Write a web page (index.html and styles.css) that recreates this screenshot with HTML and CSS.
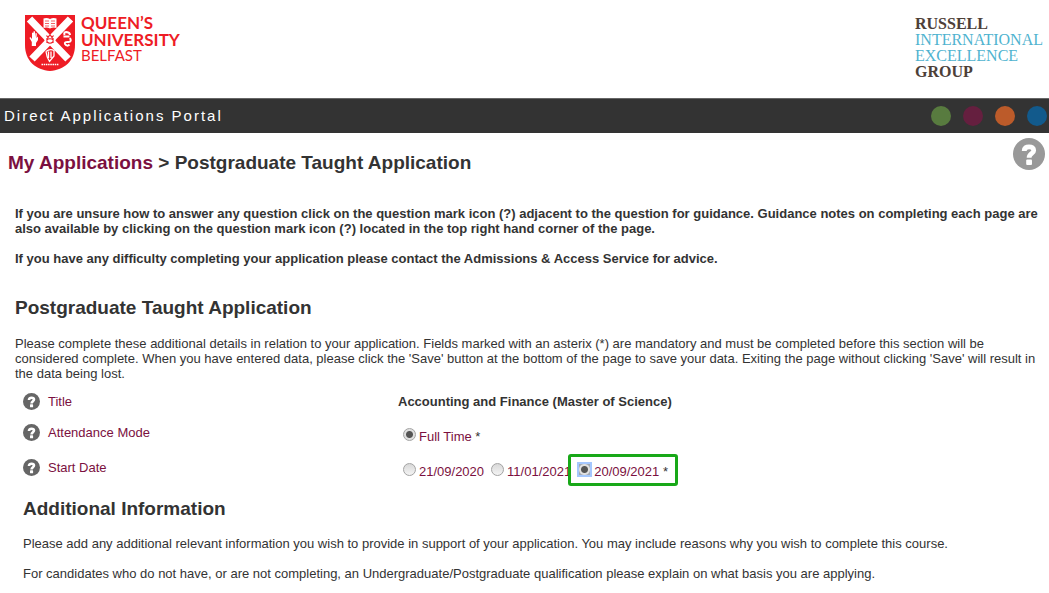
FILE: index.html
```html
<!DOCTYPE html>
<html lang="en">
<head>
<meta charset="utf-8">
<title>Direct Applications Portal</title>
<link rel="stylesheet" href="styles.css">
</head>
<body>
<svg width="0" height="0" class="defs" aria-hidden="true">
  <symbol id="help" viewBox="0 0 32 32">
    <circle cx="16" cy="16" r="16" fill="currentColor"/>
    <path d="M11.200 13C11.200 9.900 13.200 8.800 16 8.800C18.900 8.800 20.700 10.200 20.700 12.400C20.700 15.500 16.100 15.400 16.100 19.800" fill="none" stroke="#fff" stroke-width="4.800"/>
    <rect x="13.200" y="21.400" width="5.800" height="5.600" rx="1" fill="#fff"/>
  </symbol>
</svg>
<header class="masthead">
  <div class="university">
    <svg class="crest" viewBox="0 0 50 57" aria-hidden="true">
      <path fill="#ee1c25" d="M0 1H50V31C50 47 39 56 25 57C11 56 0 47 0 31Z"/>
      <path d="M4.500 5L43 45M45.500 5L7 45" stroke="#fff" stroke-width="7.500"/>
      <circle cx="25" cy="25.500" r="5.500" fill="#fff"/>
      <path fill="#fff" d="M18.500 4.500Q22 3.500 25 5Q28 3.500 31.500 4.500V14Q28 13 25 14.500Q22 13 18.500 14Z"/>
      <path d="M20 7h4M20 9.500h4M20 12h4M26 7h4M26 9.500h4M26 12h4" stroke="#ee1c25" stroke-width=".7"/>
      <path fill="#fff" d="M6.800 32V28L4.500 24L5.200 23L7 25V19Q8 18 8.500 19V23V17.500Q9.500 16.500 10 18V23L10.600 19Q11.600 18.500 11.800 20L11.500 24L13 22.500V26L11 29V32Z"/>
      <path fill="none" stroke="#fff" stroke-width="2" d="M39.500 21Q38.500 18 41.500 18Q45 18.500 45 21M38.500 22.500H44.500M45 24Q47 28 43.500 28Q39 27.500 40 30Q42 33 44.500 30.500"/>
      <path fill="none" stroke="#ee1c25" stroke-width="1.200" d="M21.500 21.500L23 23.500L25 20.500L27 23.500L28.500 21.500M21.500 26Q25 23.500 28.500 26M22 28Q25 30.500 28 28M22 24V29M28 24V29"/>
      <path fill="none" stroke="#fff" stroke-width="1.300" d="M21 37.500Q25 34.500 29 36.500V42L24.500 47.500Q21.500 43 21 37.500M23.500 37.500V44M26 37.500V44"/>
      <path stroke="#fff" stroke-width="1.500" stroke-dasharray="1.500 .7" d="M16.500 50.500H33.500"/>
    </svg>
    <div class="wordmark"><b>QUEEN’S</b><b>UNIVERSITY</b><span>BELFAST</span></div>
  </div>
  <div class="group-mark"><b>RUSSELL</b><span>INTERNATIONAL</span><span>EXCELLENCE</span><b>GROUP</b></div>
</header>
<div class="portal-bar">
  <span class="portal-name">Direct Applications Portal</span>
  <div class="themes">
    <button type="button" class="dot green" aria-label="Green theme"></button>
    <button type="button" class="dot plum" aria-label="Plum theme"></button>
    <button type="button" class="dot orange" aria-label="Orange theme"></button>
    <button type="button" class="dot blue" aria-label="Blue theme"></button>
  </div>
</div>
<main>
  <div class="title-row">
    <h1><a href="#applications">My Applications</a> &gt; Postgraduate Taught Application</h1>
    <button type="button" class="help page-help" aria-label="Page help"><svg viewBox="0 0 32 32"><use href="#help"/></svg></button>
  </div>
  <div class="content">
    <div class="intro">
      <p>If you are unsure how to answer any question click on the question mark icon (?) adjacent to the question for guidance. Guidance notes on completing each page are also available by clicking on the question mark icon (?) located in the top right hand corner of the page.</p>
      <p>If you have any difficulty completing your application please contact the Admissions &amp; Access Service for advice.</p>
    </div>
    <h2>Postgraduate Taught Application</h2>
    <p>Please complete these additional details in relation to your application. Fields marked with an asterix (*) are mandatory and must be completed before this section will be considered complete. When you have entered data, please click the 'Save' button at the bottom of the page to save your data. Exiting the page without clicking 'Save' will result in the data being lost.</p>
    <form class="details">
      <div class="field first">
        <button type="button" class="help" aria-label="Help with title"><svg viewBox="0 0 32 32"><use href="#help"/></svg></button>
        <span class="name">Title</span>
        <strong>Accounting and Finance (Master of Science)</strong>
      </div>
      <div class="field" role="radiogroup" aria-labelledby="mode-name">
        <button type="button" class="help" aria-label="Help with attendance mode"><svg viewBox="0 0 32 32"><use href="#help"/></svg></button>
        <span class="name" id="mode-name">Attendance Mode</span>
        <div class="options">
          <label><input type="radio" name="mode" checked><span>Full Time <i>*</i></span></label>
        </div>
      </div>
      <div class="field" role="radiogroup" aria-labelledby="start-name">
        <button type="button" class="help" aria-label="Help with start date"><svg viewBox="0 0 32 32"><use href="#help"/></svg></button>
        <span class="name" id="start-name">Start Date</span>
        <div class="options">
          <label><input type="radio" name="start"><span>21/09/2020</span></label>
          <label><input type="radio" name="start"><span>11/01/2021</span></label>
          <label class="highlight"><input type="radio" name="start" checked><span>20/09/2021 <i>*</i></span></label>
        </div>
      </div>
    </form>
    <section class="additional">
      <h2>Additional Information</h2>
      <p>Please add any additional relevant information you wish to provide in support of your application. You may include reasons why you wish to complete this course.</p>
      <p>For candidates who do not have, or are not completing, an Undergraduate/Postgraduate qualification please explain on what basis you are applying.</p>
    </section>
  </div>
</main>
</body>
</html>
```
FILE: styles.css
```css
* { box-sizing: border-box; }
body {
  margin: 0;
  background: #fff;
  color: #333;
  font: 13px/15px "Liberation Sans", Arial, sans-serif;
}
h1, h2, p { margin: 0; }
h1, h2 { font-size: 19px; line-height: 24px; }
a { color: #7b1040; text-decoration: none; }
button { border: 0; padding: 0; background: none; cursor: pointer; }
.defs { position: absolute; }

.masthead {
  display: flex;
  justify-content: space-between;
  align-items: flex-start;
  padding: 14px 5px 13px 25px;
}
.university { display: flex; gap: 6px; }
.crest { width: 50px; height: 57px; }
.wordmark {
  display: flex;
  flex-direction: column;
  color: #ee1c25;
  font: 17px/17px Lato, sans-serif;
}
.wordmark b { font-weight: 700; }
.wordmark span { font-size: 15px; line-height: 15px; }
.group-mark {
  display: flex;
  flex-direction: column;
  padding: 2px 0 5px;
  width: 129px;
  color: #4fb3cf;
  font: 16px/16px "Liberation Serif", serif;
}
.group-mark b { color: #4d4038; }

.portal-bar {
  display: flex;
  justify-content: space-between;
  align-items: center;
  height: 35px;
  padding: 0 2px 0 4px;
  border-top: 1px solid #666;
  background: #333;
  color: #fff;
  font-size: 15px;
  letter-spacing: 2px;
}
.portal-name { padding-bottom: 2px; }
.themes { display: flex; gap: 12px; }
.dot { width: 20px; height: 20px; border-radius: 50%; }
.green { background: #587b3f; }
.plum { background: #651f3f; }
.orange { background: #bc5b2a; }
.blue { background: #125a8c; }

.title-row {
  display: flex;
  justify-content: space-between;
  align-items: flex-start;
  padding: 5px 4px 0 8px;
}
.title-row h1 { padding-top: 13px; }
.help { width: 17px; height: 17px; color: #666; }
.help svg { display: block; width: 100%; height: 100%; }
.page-help { width: 32px; height: 32px; color: #999; }

.content { padding: 31px 11px 12px 15px; }
.intro { font-weight: bold; }
.intro p + p { margin-top: 15px; }
.content > h2 { margin: 30px 0 16px; }

.details { padding: 5px 0 10px 8px; }
.field {
  display: grid;
  grid-template-columns: 17px 342px 1fr;
  column-gap: 8px;
  align-items: start;
  min-height: 35px;
  padding-top: 7px;
}
.field.first { min-height: 31px; }
.field .name, .field strong { padding-top: 1px; }
.name, .options { color: #7b1040; }
.options { display: flex; gap: 7px; padding: 4px 0 0 5px; }
.options label { display: flex; gap: 3px; position: relative; white-space: nowrap; }
.options label span { padding-top: 1px; }
.options i { font-style: normal; color: #333; }
.options input {
  appearance: none;
  width: 13px;
  height: 13px;
  margin: 0;
  border: 1px solid #a3a3a3;
  border-radius: 50%;
  background: linear-gradient(#d8d8d8, #f4f4f4);
}
.options input:checked {
  background: radial-gradient(circle, #555 0 3px, #e0e0e0 4px);
}
.options .highlight input {
  width: 15px;
  height: 15px;
  margin: -1px;
  border: 2px solid #a5c7fe;
  border-radius: 0;
  background: radial-gradient(circle, #555 0 3px, #e0e0e0 4px 5px, #a0a8b4 6px);
}
.highlight::after {
  content: "";
  position: absolute;
  inset: -9px -10px -7px;
  border: 3px solid #18a818;
  border-radius: 3px;
  pointer-events: none;
}

.additional { padding-left: 8px; }
.additional p { margin-top: 15px; }
```
